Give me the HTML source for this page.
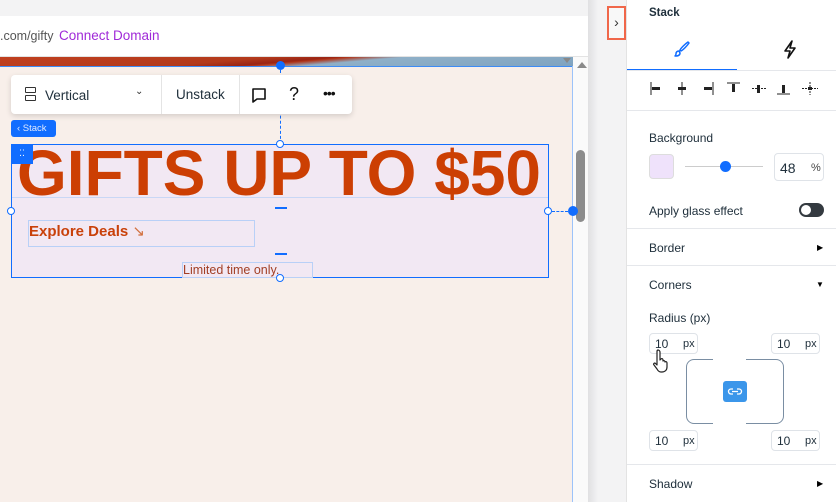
<!DOCTYPE html>
<html><head><meta charset="utf-8"><style>
*{box-sizing:border-box;margin:0;padding:0}
body{width:836px;height:502px;overflow:hidden;background:#f3f3f4;font-family:"Liberation Sans",sans-serif;position:relative}
.abs{position:absolute}
.t{font-size:12px;color:#20303c}
.inp{position:absolute;border:1px solid #dfe3e8;border-radius:4px;height:21px;width:49px;background:#fff;font-size:12px;color:#20303c}
.inp span{position:absolute;top:1px;line-height:19px}
.sep{position:absolute;left:627px;width:209px;height:1px;background:#e5e7eb}
</style></head><body>
<div class="abs" style="left:0;top:16px;width:588px;height:41px;background:#fff;border-bottom:1px solid #e3e3e3"></div>
<div class="abs" style="left:0;top:29px;font-size:12.5px;color:#555">.com/gifty</div>
<div class="abs" style="left:59px;top:28px;font-size:13.5px;color:#a02ad8">Connect Domain</div>
<div class="abs" style="left:0;top:57px;width:573px;height:9px;background:linear-gradient(175deg,#c0401f 0%,#b33a1c 40%,#9a2414 50%,#b13418 52%,#8fb0c8 60%,#7fa3c0 100%)"></div>
<div class="abs" style="left:0;top:66px;width:573px;height:436px;background:#f8efea"></div>
<div class="abs" style="left:573px;top:57px;width:15px;height:445px;background:#fafafa"></div>
<div class="abs" style="left:577px;top:62px;width:0;height:0;border-left:5px solid transparent;border-right:5px solid transparent;border-bottom:6px solid #8a8a8a"></div>
<div class="abs" style="left:563px;top:58px;width:0;height:0;border-left:4px solid transparent;border-right:4px solid transparent;border-top:5px solid #888"></div>
<div class="abs" style="left:576px;top:150px;width:9px;height:72px;background:#8c8c8c;border-radius:5px"></div>
<div class="abs" style="left:588px;top:0;width:10px;height:502px;background:linear-gradient(90deg,#e0e0e2,#f3f3f4)"></div>
<div class="abs" style="left:0;top:66px;width:573px;height:1px;background:#3d8bf5"></div>
<div class="abs" style="left:572px;top:66px;width:1px;height:436px;background:#9cc3fa"></div>
<div class="abs" style="left:276px;top:61px;width:9px;height:9px;border-radius:50%;background:#116dff"></div>
<div class="abs" style="left:280px;top:70px;height:74px;border-left:1px dashed #116dff"></div>
<div class="abs" style="left:11px;top:75px;width:341px;height:39px;background:#fff;border-radius:4px;box-shadow:0 2px 6px rgba(0,0,0,.15)"></div>
<div class="abs" style="left:25px;top:87px;width:11px;height:6px;border:1.3px solid #333;border-radius:1px"></div>
<div class="abs" style="left:25px;top:95px;width:11px;height:6px;border:1.3px solid #333;border-radius:1px"></div>
<div class="abs" style="left:45px;top:88px;font-size:13.5px;color:#20303c">Vertical</div>
<div class="abs" style="left:135px;top:86px;font-size:10px;color:#333">⌄</div>
<div class="abs" style="left:161px;top:75px;width:1px;height:39px;background:#e4e4e4"></div>
<div class="abs" style="left:176px;top:87px;font-size:13.5px;color:#20303c">Unstack</div>
<div class="abs" style="left:239px;top:75px;width:1px;height:39px;background:#e4e4e4"></div>
<svg class="abs" style="left:251px;top:87px" width="16" height="17"><path d="M2 2h12v10H6l-4 3z" fill="none" stroke="#111" stroke-width="1.6" stroke-linejoin="round"/></svg>
<div class="abs" style="left:289px;top:84px;font-size:18px;color:#111">?</div>
<div class="abs" style="left:323px;top:85px;font-size:14px;color:#111;letter-spacing:-1px">•••</div>
<div class="abs" style="left:11px;top:120px;width:45px;height:17px;background:#116dff;border-radius:3px;color:#dfe9ff;font-size:9.5px;padding:3px 0 0 6px">‹ Stack</div>
<div class="abs" style="left:11px;top:144px;width:538px;height:134px;background:#f2e8f3;border:1.5px solid #116dff"></div>
<div class="abs" style="left:12px;top:197px;width:536px;height:1px;background:#c9d7f5"></div>
<svg class="abs" style="left:0;top:140px" width="560" height="60"><text x="17" y="55" textLength="524" lengthAdjust="spacingAndGlyphs" font-family="Liberation Sans" font-weight="bold" font-size="64" fill="#cc3f03">GIFTS UP TO $50</text></svg>
<div class="abs" style="left:11px;top:144px;width:22px;height:20px;background:#116dff;color:#fff;font-size:9px;text-align:center;line-height:18px">⁚⁚</div>
<div class="abs" style="left:275px;top:207px;width:12px;height:2px;background:#116dff"></div>
<div class="abs" style="left:275px;top:253px;width:12px;height:2px;background:#116dff"></div>
<div class="abs" style="left:28px;top:220px;width:227px;height:27px;border:1px solid #b9d0f7"></div>
<div class="abs" style="left:29px;top:222px;font-size:15px;font-weight:bold;color:#c9410a">Explore Deals <span style="font-weight:normal;color:#d2703e">↘</span></div>
<div class="abs" style="left:182px;top:262px;width:131px;height:16px;border:1px solid #b9d0f7"></div>
<div class="abs" style="left:183px;top:263px;font-size:12.5px;color:#a23f25">Limited time only.</div>
<div class="abs" style="left:7px;top:207px;width:8px;height:8px;border-radius:50%;background:#fff;border:1px solid #116dff"></div>
<div class="abs" style="left:544px;top:207px;width:8px;height:8px;border-radius:50%;background:#fff;border:1px solid #116dff"></div>
<div class="abs" style="left:276px;top:140px;width:8px;height:8px;border-radius:50%;background:#fff;border:1px solid #116dff"></div>
<div class="abs" style="left:276px;top:274px;width:8px;height:8px;border-radius:50%;background:#fff;border:1px solid #116dff"></div>
<div class="abs" style="left:552px;top:211px;width:16px;border-top:1px dashed #116dff"></div>
<div class="abs" style="left:568px;top:206px;width:10px;height:10px;border-radius:50%;background:#116dff"></div>
<div class="abs" style="left:607px;top:6px;width:19px;height:34px;border:2px solid #f0674a;background:#f8f8f8;font-size:14px;color:#333;text-align:center;line-height:28px">›</div>
<div class="abs" style="left:626px;top:0;width:210px;height:502px;background:#fff;border-left:1px solid #e3e3e3"></div>
<div class="abs" style="left:649px;top:7px;font-size:11.5px;font-weight:bold;color:#20303c">Stack</div>
<svg class="abs" style="left:673px;top:40px" width="18" height="18"><path d="M15 2c-3 2-7 6-8 8l1 1c2-1 6-5 8-8zM6 11c-2 0-3 1-3 3 0 1-1 2-1 2 2 0 5 0 5-3z" fill="none" stroke="#116dff" stroke-width="1.5" stroke-linejoin="round"/></svg>
<svg class="abs" style="left:782px;top:40px" width="16" height="19"><path d="M10 1L3 11h5l-2 7 7-10H8z" fill="none" stroke="#111" stroke-width="1.6" stroke-linejoin="round"/></svg>
<div class="abs" style="left:627px;top:69px;width:110px;height:2px;background:#116dff"></div>
<div class="sep" style="top:70px"></div>
<svg class="abs" style="left:648px;top:80px" width="176" height="18" fill="#222" stroke="#222">
<line x1="3" y1="2" x2="3" y2="15" stroke-width="1"/><rect x="4" y="7" width="8" height="3" stroke="none"/>
<line x1="34" y1="2" x2="34" y2="15" stroke-width="1"/><rect x="30" y="7" width="8" height="3" stroke="none"/>
<line x1="65" y1="2" x2="65" y2="15" stroke-width="1"/><rect x="56" y="7" width="8" height="3" stroke="none"/>
<line x1="79" y1="3" x2="92" y2="3" stroke-width="1"/><rect x="84" y="4" width="3" height="8" stroke="none"/>
<line x1="104" y1="8.5" x2="118" y2="8.5" stroke-width="1" stroke-dasharray="2,1"/><rect x="109" y="5" width="3" height="8" stroke="none"/>
<line x1="129" y1="14" x2="142" y2="14" stroke-width="1"/><rect x="134" y="5" width="3" height="8" stroke="none"/>
<line x1="154" y1="8.5" x2="170" y2="8.5" stroke-width="1" stroke-dasharray="2,1"/><line x1="162" y1="2" x2="162" y2="15" stroke-width="1" stroke-dasharray="2,1"/><rect x="160" y="7" width="4" height="3" stroke="none"/>
</svg>
<div class="sep" style="top:110px"></div>
<div class="abs t" style="left:649px;top:131px">Background</div>
<div class="abs" style="left:649px;top:154px;width:25px;height:25px;background:#efe2fb;border:1px solid #ddd;border-radius:4px"></div>
<div class="abs" style="left:685px;top:166px;width:78px;height:1px;background:#ccc"></div>
<div class="abs" style="left:720px;top:161px;width:11px;height:11px;border-radius:50%;background:#116dff"></div>
<div class="abs" style="left:774px;top:153px;width:50px;height:28px;border:1px solid #dfe3e8;border-radius:4px"></div>
<div class="abs" style="left:780px;top:160px;font-size:14px;color:#20303c">48</div>
<div class="abs" style="left:811px;top:162px;font-size:11px;color:#444">%</div>
<div class="abs t" style="left:649px;top:204px">Apply glass effect</div>
<div class="abs" style="left:799px;top:203px;width:25px;height:14px;border-radius:7px;background:#343a40"></div>
<div class="abs" style="left:801px;top:205px;width:10px;height:10px;border-radius:50%;background:#fff"></div>
<div class="sep" style="top:228px"></div>
<div class="abs t" style="left:649px;top:241px">Border</div>
<div class="abs" style="left:817px;top:243px;font-size:8px">▶</div>
<div class="sep" style="top:265px"></div>
<div class="abs t" style="left:649px;top:278px">Corners</div>
<div class="abs" style="left:816px;top:280px;font-size:8px">▼</div>
<div class="abs t" style="left:649px;top:311px">Radius (px)</div>
<div class="inp" style="left:649px;top:333px"><span style="left:5px">10</span><span style="left:33px;font-size:11px">px</span></div>
<div class="inp" style="left:771px;top:333px"><span style="left:5px">10</span><span style="left:33px;font-size:11px">px</span></div>
<div class="inp" style="left:649px;top:430px"><span style="left:5px">10</span><span style="left:33px;font-size:11px">px</span></div>
<div class="inp" style="left:771px;top:430px"><span style="left:5px">10</span><span style="left:33px;font-size:11px">px</span></div>
<div class="abs" style="left:686px;top:359px;width:98px;height:65px;border:1px solid #7a8ea3;border-radius:8px"></div>
<div class="abs" style="left:713px;top:357px;width:33px;height:69px;background:#fff"></div>
<div class="abs" style="left:723px;top:381px;width:24px;height:21px;background:#3b96ea;border-radius:3px"></div>
<svg class="abs" style="left:723px;top:381px" width="24" height="21"><path d="M10 8H8a2.5 2.5 0 000 5h2M14 8h2a2.5 2.5 0 010 5h-2M9 10.5h6" fill="none" stroke="#fff" stroke-width="1.3"/></svg>
<svg class="abs" style="left:652px;top:348px" width="22" height="26"><path d="M6 2c1 0 2 1 2 2v8l1-1c1-1 2 0 2 1v1c1-1 2 0 2 1 1-1 2 0 2 1v4c0 3-2 5-5 5H9c-2 0-3-1-4-3l-3-4c-1-1 0-2 1-2l2 2V4c0-1 0-2 1-2z" fill="#fff" stroke="#222" stroke-width="1.2" stroke-linejoin="round"/></svg>
<div class="sep" style="top:464px"></div>
<div class="abs t" style="left:649px;top:477px">Shadow</div>
<div class="abs" style="left:817px;top:479px;font-size:8px">▶</div>
</body></html>
